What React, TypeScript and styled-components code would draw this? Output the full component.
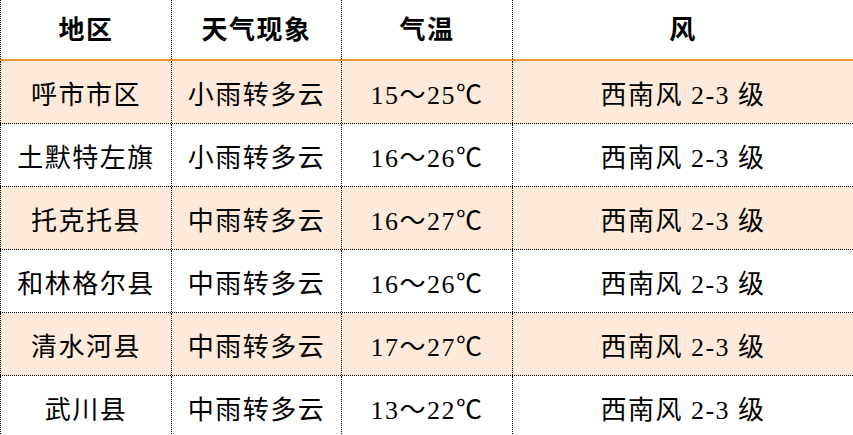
import React from "react";
import styled, { createGlobalStyle } from "styled-components";

const Global = createGlobalStyle`
  html, body { margin: 0; padding: 0; background: #ffffff; }
  body { font-family: "Liberation Serif", "Noto Sans CJK SC", serif; }
`;

const Table = styled.div`
  width: 853px;
  height: 435px;
  overflow: hidden;
  display: flex;
  flex-direction: column;
  color: #000;
`;

const Row = styled.div<{ $header?: boolean; $shaded?: boolean }>`
  display: grid;
  grid-template-columns: 171px 170px 171px 1fr;
  box-sizing: border-box;
  flex: none;
  height: ${(p) => (p.$header ? "61px" : "63px")};
  background: ${(p) => (p.$shaded ? "#fdeada" : "#ffffff")};
  border-bottom: ${(p) => (p.$header ? "2px solid #f0913f" : "1px dotted #000")};
`;

const Cell = styled.div<{ $header?: boolean }>`
  box-sizing: border-box;
  border-left: 1px dotted #000;
  display: flex;
  align-items: center;
  justify-content: center;
  font-family: "Liberation Serif", "Noto Sans CJK SC", serif;
  font-size: 26px;
  font-weight: ${(p) => (p.$header ? 700 : 400)};
  letter-spacing: 1.5px;
  padding-bottom: ${(p) => (p.$header ? "4px" : "0")};
  white-space: nowrap;
`;

const headers = ["地区", "天气现象", "气温", "风"];

const rows = [
  ["呼市市区", "小雨转多云", "15～25℃", "西南风 2-3 级"],
  ["土默特左旗", "小雨转多云", "16～26℃", "西南风 2-3 级"],
  ["托克托县", "中雨转多云", "16～27℃", "西南风 2-3 级"],
  ["和林格尔县", "中雨转多云", "16～26℃", "西南风 2-3 级"],
  ["清水河县", "中雨转多云", "17～27℃", "西南风 2-3 级"],
  ["武川县", "中雨转多云", "13～22℃", "西南风 2-3 级"],
];

export default function App() {
  return (
    <>
      <Global />
      <Table>
        <Row $header>
          {headers.map((h) => (
            <Cell key={h} $header>
              {h}
            </Cell>
          ))}
        </Row>
        {rows.map((r, i) => (
          <Row key={r[0]} $shaded={i % 2 === 0}>
            {r.map((c, j) => (
              <Cell key={j}>{c}</Cell>
            ))}
          </Row>
        ))}
      </Table>
    </>
  );
}
